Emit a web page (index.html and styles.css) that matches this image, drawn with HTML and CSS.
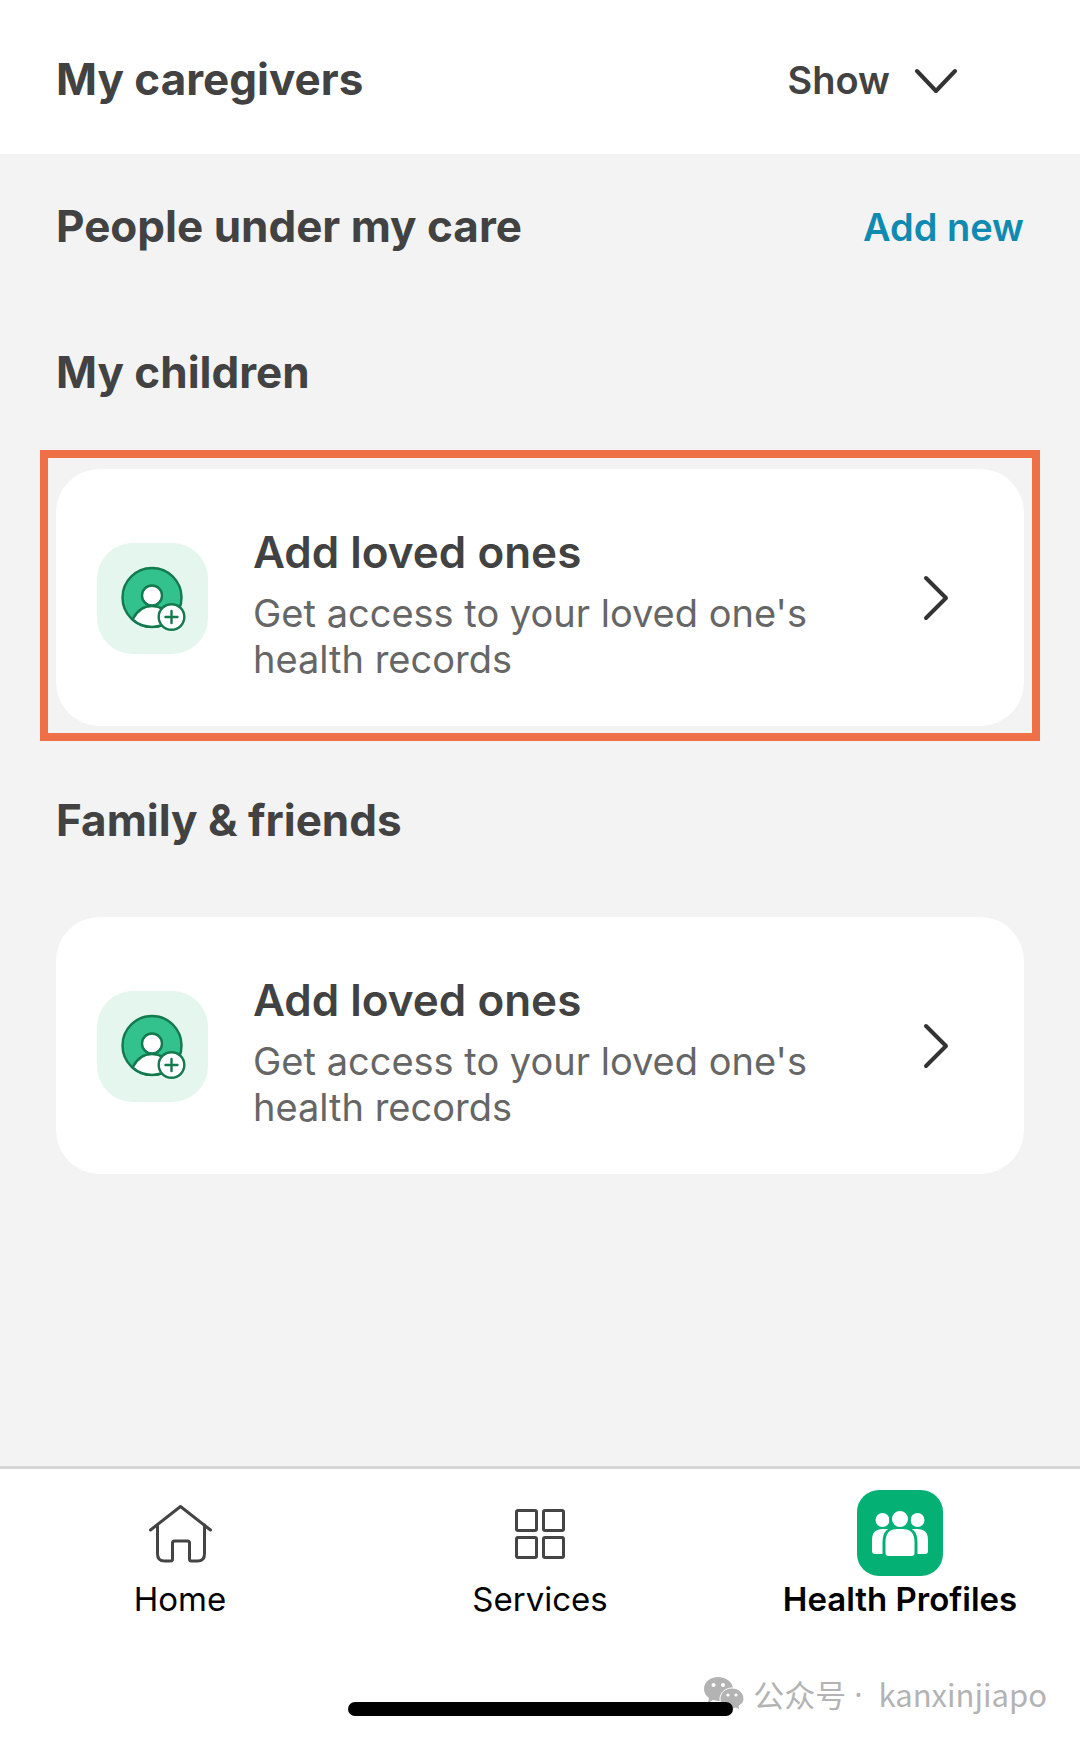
FILE: index.html
```html
<!DOCTYPE html>
<html lang="en">
<head>
    <meta charset="UTF-8">
    <meta name="viewport" content="width=device-width, initial-scale=1.0">
    <title>Health Profiles</title>
    <link rel="stylesheet" href="styles.css">
</head>
<body>
    <header class="caregivers">
        <h2>My caregivers</h2>
        <button class="toggle" type="button">
            Show
            <svg width="44" height="26" viewBox="0 0 44 26" fill="none" stroke="#333" stroke-width="4" stroke-linecap="round" stroke-linejoin="round">
                <path d="M3 4l19 20L41 4"/>
            </svg>
        </button>
    </header>

    <main class="content">
        <div class="row">
            <h2>People under my care</h2>
            <a class="add-new" href="#">Add new</a>
        </div>

        <section class="group">
            <h2>My children</h2>
            <a class="card highlighted" href="#">
                <span class="card-icon">
                    <svg width="66" height="66" viewBox="0 0 66 66" stroke="#13794e" stroke-width="2.4">
                        <circle cx="32" cy="32.5" r="29.5" fill="#33c28e"/>
                        <path d="M12.5 54.500C17 45.500 24 41 32 41s15 4.500 19.500 13.500A29.500 29.500 0 0 1 12.500 54.500z" fill="#fff"/>
                        <circle cx="32" cy="30.500" r="10" fill="#fff"/>
                        <circle cx="51.500" cy="52" r="12.800" fill="#fff"/>
                        <path d="M51.500 46v12M45.500 52h12" stroke-linecap="round"/>
                    </svg>
                </span>
                <span class="card-text">
                    <strong>Add loved ones</strong>
                    <span>Get access to your loved one's health records</span>
                </span>
                <svg width="26" height="46" viewBox="0 0 26 46" fill="none" stroke="#333" stroke-width="4" stroke-linecap="round" stroke-linejoin="round">
                    <path d="M3 3l20 20L3 43"/>
                </svg>
            </a>
        </section>

        <section class="group">
            <h2>Family &amp; friends</h2>
            <a class="card" href="#">
                <span class="card-icon">
                    <svg width="66" height="66" viewBox="0 0 66 66" stroke="#13794e" stroke-width="2.4">
                        <circle cx="32" cy="32.5" r="29.5" fill="#33c28e"/>
                        <path d="M12.5 54.500C17 45.500 24 41 32 41s15 4.500 19.500 13.500A29.500 29.500 0 0 1 12.500 54.500z" fill="#fff"/>
                        <circle cx="32" cy="30.500" r="10" fill="#fff"/>
                        <circle cx="51.500" cy="52" r="12.800" fill="#fff"/>
                        <path d="M51.500 46v12M45.500 52h12" stroke-linecap="round"/>
                    </svg>
                </span>
                <span class="card-text">
                    <strong>Add loved ones</strong>
                    <span>Get access to your loved one's health records</span>
                </span>
                <svg width="26" height="46" viewBox="0 0 26 46" fill="none" stroke="#333" stroke-width="4" stroke-linecap="round" stroke-linejoin="round">
                    <path d="M3 3l20 20L3 43"/>
                </svg>
            </a>
        </section>
    </main>

    <footer class="bottom">
        <nav class="tabs">
            <a class="tab" href="#">
                <svg width="86" height="86" viewBox="0 0 86 86" fill="none" stroke="#444" stroke-width="3" stroke-linecap="round" stroke-linejoin="round">
                    <path d="M13.500 40L43.500 16.500 73.500 40"/>
                    <path d="M20.500 35v29q0 7 7 7h6q2 0 2-2V53q0-2 2-2h13q2 0 2 2v16q0 2 2 2h6q7 0 7-7V35"/>
                </svg>
                Home
            </a>
            <a class="tab" href="#">
                <svg width="86" height="86" viewBox="0 0 86 86" fill="none" stroke="#444" stroke-width="3">
                    <rect x="19.500" y="20.500" width="20" height="20" rx="1.500"/>
                    <rect x="46.500" y="20.500" width="20" height="20" rx="1.500"/>
                    <rect x="19.500" y="47.500" width="20" height="20" rx="1.500"/>
                    <rect x="46.500" y="47.500" width="20" height="20" rx="1.500"/>
                </svg>
                Services
            </a>
            <a class="tab active" href="#" aria-current="page">
                <svg width="86" height="86" viewBox="0 0 86 86" fill="#fff">
                    <rect width="86" height="86" rx="22" fill="#05b074"/>
                    <circle cx="25.500" cy="30" r="7"/>
                    <circle cx="60.500" cy="30" r="7"/>
                    <path d="M15 61V50q0-11 11-11h34q11 0 11 11v11q0 3-3 3H18q-3 0-3-3z"/>
                    <path d="M28 67V52q0-13 13-13h4q13 0 13 13v15z" stroke="#05b074" stroke-width="5"/>
                    <rect x="29" y="36" width="28" height="3" fill="#05b074"/>
                    <circle cx="43" cy="29" r="9.500" stroke="#05b074" stroke-width="3"/>
                    <path d="M28.500 63V52q0-13 12-13h5q12 0 12 13v11q0 3-3 3h-23q-3 0-3-3z"/>
                </svg>
                Health Profiles
            </a>
        </nav>
        <div class="watermark">
            <svg width="42" height="36" viewBox="0 0 42 36" fill="#b3b3b3">
                <path d="M15 1C7 1 1 6 1 13c0 4 2 7 5 9l-1 5 5-3 5 1C23 25 30 20 30 13S23 1 15 1z"/>
                <path d="M29 12c-7 0-12 5-12 11s5 10 12 10l4-1 4 2-1-4c3-2 5-4 5-7 0-6-5-11-12-11z" stroke="#fff"/>
                <g fill="#fff">
                    <circle cx="10.500" cy="9" r="2"/><circle cx="20" cy="9" r="2"/>
                    <circle cx="25" cy="19" r="1.600"/><circle cx="33" cy="19" r="1.600"/>
                </g>
            </svg>
            <span lang="zh">公众号</span>
            <span class="dot">·</span>
            <span>kanxinjiapo</span>
        </div>
        <div class="home-indicator"></div>
    </footer>
</body>
</html>
```
FILE: styles.css
```css
* {
    box-sizing: border-box;
}
body {
    margin: 0;
    min-height: 100vh;
    display: flex;
    flex-direction: column;
    background: #f3f3f3;
    color: #424242;
    font-family: Inter, "Liberation Sans", sans-serif;
}
h2 {
    margin: 0;
    font-size: 44px;
    line-height: 56px;
    font-weight: 700;
}
a {
    color: inherit;
    text-decoration: none;
}
svg {
    flex: none;
}
.caregivers {
    display: flex;
    justify-content: space-between;
    align-items: center;
    padding: 51px 122px 47px 56px;
    background: #fff;
}
.toggle {
    display: flex;
    align-items: center;
    gap: 24px;
    padding: 2px 0 0;
    border: none;
    background: none;
    color: inherit;
    font: 600 38px/46px Inter, "Liberation Sans", sans-serif;
    cursor: pointer;
}
.content {
    flex: 1;
    padding: 44px 56px;
}
.row {
    display: flex;
    justify-content: space-between;
    align-items: center;
    margin-bottom: 90px;
}
.add-new {
    padding-top: 2px;
    color: #0f8ab0;
    font-size: 38px;
    line-height: 46px;
    font-weight: 600;
}
.group {
    margin-bottom: 66px;
}
.card {
    position: relative;
    display: flex;
    align-items: center;
    gap: 45px;
    margin-top: 69px;
    padding: 45px 75px 44px 41px;
    border-radius: 44px;
    background: #fff;
}
.highlighted::after {
    content: "";
    position: absolute;
    inset: -19px -16px -15px;
    border: 8px solid #ef7046;
    pointer-events: none;
}
.card-icon {
    display: flex;
    flex: none;
    align-items: center;
    justify-content: center;
    width: 111px;
    height: 111px;
    border-radius: 36px;
    background: #e4f6ed;
}
.card-text {
    flex: 1;
    display: flex;
    flex-direction: column;
    gap: 10px;
    padding-top: 10px;
    color: #666;
    font-size: 38px;
    line-height: 46px;
}
.card-text strong {
    color: #424242;
    font-size: 44px;
    line-height: 56px;
    font-weight: 600;
}
.bottom {
    position: relative;
    padding: 21px 0 22px;
    border-top: 3px solid #d5d5d5;
    background: #fff;
}
.tabs {
    display: grid;
    grid-template-columns: repeat(3, 1fr);
    margin-bottom: 82px;
}
.tab {
    display: flex;
    flex-direction: column;
    align-items: center;
    gap: 2px;
    color: #000;
    font-size: 33px;
    line-height: 42px;
}
.tab.active {
    font-weight: 600;
}
.home-indicator {
    position: relative;
    width: 36%;
    max-width: 385px;
    height: 14px;
    margin: 0 auto;
    border-radius: 7px;
    background: #000;
}
.watermark {
    position: absolute;
    right: 33px;
    bottom: 22px;
    display: flex;
    align-items: center;
    gap: 8px;
    color: #b3b3b3;
    font-family: "Noto Sans CJK SC", sans-serif;
    font-size: 31px;
    line-height: 44px;
}
.watermark .dot {
    padding-right: 8px;
    font-family: "Noto Sans", sans-serif;
}
```
